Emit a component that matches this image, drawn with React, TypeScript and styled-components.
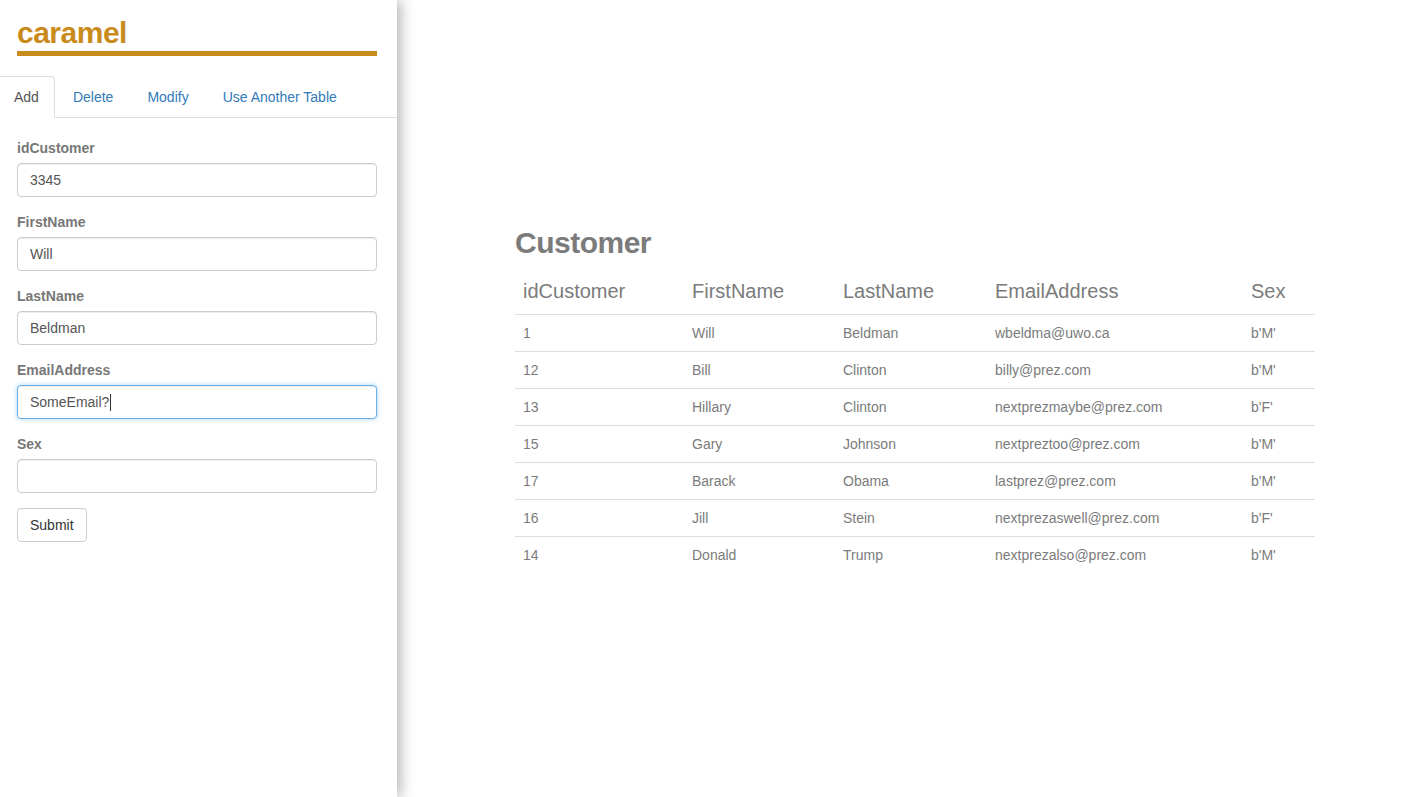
import React from "react";
import styled, { createGlobalStyle } from "styled-components";

const Global = createGlobalStyle`
  html, body { margin: 0; padding: 0; background: #fff; }
  body { font-family: "Liberation Sans", Arial, Helvetica, sans-serif; font-size: 14px; line-height: 20px; color: #333; }
  * { box-sizing: border-box; }
`;

const Page = styled.div`
  display: flex;
  width: 1426px;
  height: 797px;
  overflow: hidden;
`;

const Sidebar = styled.aside`
  width: 397px;
  height: 797px;
  flex-shrink: 0;
  background: #fff;
  box-shadow: 3px 0 14px rgba(0, 0, 0, 0.32);
  position: relative;
  z-index: 1;
  overflow: hidden;
`;

const Brand = styled.h1`
  margin: 0 20px 20px 17px;
  padding: 16px 0 2px;
  font-size: 30px;
  line-height: 33px;
  font-weight: bold;
  letter-spacing: -0.5px;
  color: #c98b1c;
  border-bottom: 5px solid #c98b1c;
`;

const Tabs = styled.ul`
  list-style: none;
  margin: 0 0 0 -2px;
  padding: 0;
  display: flex;
  border-bottom: 1px solid #ddd;
`;

const Tab = styled.li<{ $active?: boolean }>`
  margin-bottom: -1px;
  margin-right: 2px;
  padding: 10px 15px;
  line-height: 20px;
  font-size: 14px;
  border: 1px solid ${(p) => (p.$active ? "#ddd" : "transparent")};
  border-bottom-color: ${(p) => (p.$active ? "#fff" : "transparent")};
  border-radius: 4px 4px 0 0;
  background: ${(p) => (p.$active ? "#fff" : "transparent")};
  color: ${(p) => (p.$active ? "#555" : "#337ab7")};
  cursor: pointer;
`;

const Form = styled.form`
  padding: 20px 20px 0 17px;
  display: flex;
  flex-direction: column;
`;

const Group = styled.div`
  display: flex;
  flex-direction: column;
  margin-bottom: 15px;
`;

const Label = styled.label`
  font-weight: bold;
  font-size: 14px;
  line-height: 20px;
  color: #777;
  margin-bottom: 5px;
`;

const Input = styled.input`
  height: 34px;
  width: 360px;
  padding: 6px 12px;
  font-family: inherit;
  font-size: 14px;
  line-height: 20px;
  color: #555;
  background: #fff;
  border: 1px solid #ccc;
  border-radius: 4px;
  box-shadow: inset 0 1px 1px rgba(0, 0, 0, 0.075);
  outline: none;
`;

const FocusedField = styled.div`
  height: 34px;
  width: 360px;
  padding: 6px 12px;
  font-size: 14px;
  line-height: 20px;
  color: #555;
  background: #fff;
  border: 1px solid #66afe9;
  border-radius: 4px;
  box-shadow: inset 0 1px 1px rgba(0, 0, 0, 0.075), 0 0 5px rgba(102, 175, 233, 0.55);
  display: flex;
  align-items: center;
`;

const Caret = styled.span`
  display: inline-block;
  width: 1px;
  height: 17px;
  background: #333;
  margin-left: 1px;
`;

const Button = styled.button`
  align-self: flex-start;
  height: 34px;
  padding: 6px 12px;
  font-family: inherit;
  font-size: 14px;
  line-height: 20px;
  color: #333;
  background: #fff;
  border: 1px solid #ccc;
  border-radius: 4px;
  cursor: pointer;
`;

const Main = styled.main`
  flex: 1;
  padding: 226px 0 0 118px;
`;

const Heading = styled.h2`
  margin: 0 0 10px;
  font-size: 30px;
  line-height: 33px;
  font-weight: bold;
  letter-spacing: -0.5px;
  color: #7b7b7b;
`;

const Table = styled.table`
  width: 800px;
  border-collapse: collapse;
  table-layout: fixed;
`;

const Th = styled.th<{ $w: number }>`
  width: ${(p) => p.$w}px;
  text-align: left;
  font-weight: normal;
  font-size: 20px;
  line-height: 28.5px;
  padding: 8px;
  color: #7b7b7b;
  border-bottom: 1px solid #ddd;
`;

const Tr = styled.tr`
  & + & td {
    border-top: 1px solid #ddd;
  }
`;

const Td = styled.td`
  padding: 8px;
  font-size: 14px;
  line-height: 20px;
  color: #7b7b7b;
`;

const columns: [string, number][] = [
  ["idCustomer", 169],
  ["FirstName", 151],
  ["LastName", 152],
  ["EmailAddress", 256],
  ["Sex", 72],
];

const rows = [
  ["1", "Will", "Beldman", "wbeldma@uwo.ca", "b'M'"],
  ["12", "Bill", "Clinton", "billy@prez.com", "b'M'"],
  ["13", "Hillary", "Clinton", "nextprezmaybe@prez.com", "b'F'"],
  ["15", "Gary", "Johnson", "nextpreztoo@prez.com", "b'M'"],
  ["17", "Barack", "Obama", "lastprez@prez.com", "b'M'"],
  ["16", "Jill", "Stein", "nextprezaswell@prez.com", "b'F'"],
  ["14", "Donald", "Trump", "nextprezalso@prez.com", "b'M'"],
];

export default function App() {
  return (
    <>
      <Global />
      <Page>
        <Sidebar>
          <Brand>caramel</Brand>
          <Tabs>
            <Tab $active>Add</Tab>
            <Tab>Delete</Tab>
            <Tab>Modify</Tab>
            <Tab>Use Another Table</Tab>
          </Tabs>
          <Form onSubmit={(e) => e.preventDefault()}>
            <Group>
              <Label>idCustomer</Label>
              <Input defaultValue="3345" />
            </Group>
            <Group>
              <Label>FirstName</Label>
              <Input defaultValue="Will" />
            </Group>
            <Group>
              <Label>LastName</Label>
              <Input defaultValue="Beldman" />
            </Group>
            <Group>
              <Label>EmailAddress</Label>
              <FocusedField>
                SomeEmail?
                <Caret />
              </FocusedField>
            </Group>
            <Group>
              <Label>Sex</Label>
              <Input defaultValue="" />
            </Group>
            <Button type="submit">Submit</Button>
          </Form>
        </Sidebar>
        <Main>
          <Heading>Customer</Heading>
          <Table>
            <thead>
              <tr>
                {columns.map(([c, w]) => (
                  <Th key={c} $w={w}>
                    {c}
                  </Th>
                ))}
              </tr>
            </thead>
            <tbody>
              {rows.map((r) => (
                <Tr key={r[0]}>
                  {r.map((v, i) => (
                    <Td key={i}>{v}</Td>
                  ))}
                </Tr>
              ))}
            </tbody>
          </Table>
        </Main>
      </Page>
    </>
  );
}
